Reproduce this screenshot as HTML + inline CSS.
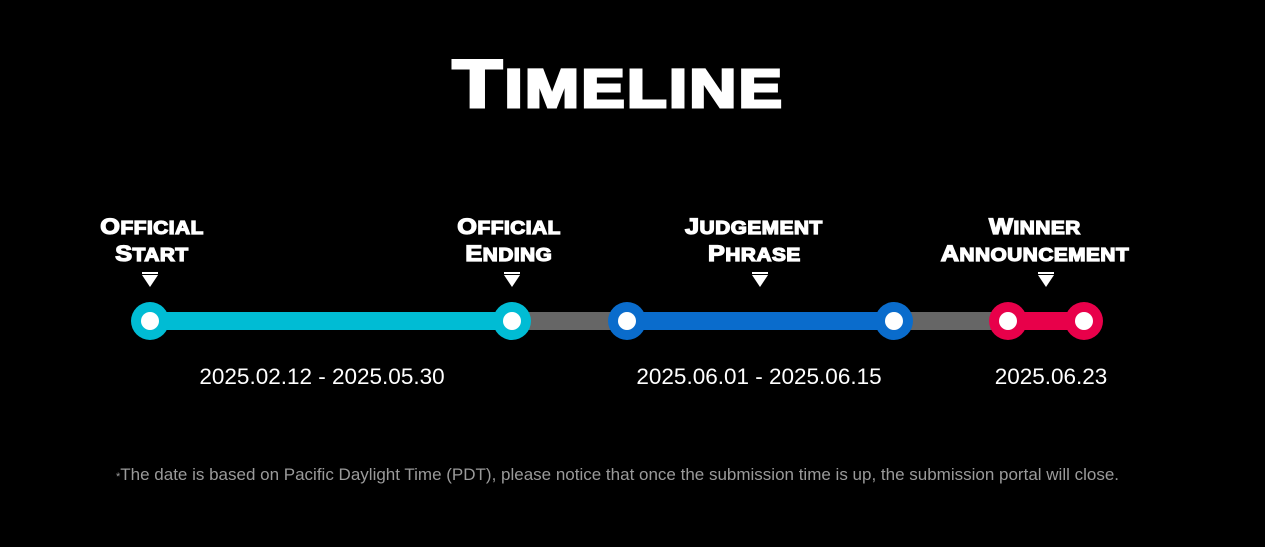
<!DOCTYPE html>
<html><head><style>
body{margin:0;width:1265px;height:547px;background:#000;position:relative;overflow:hidden;font-family:"Liberation Sans",sans-serif}
.t{position:absolute;left:-14px;width:1265px;top:48px;text-align:center;color:#fff;font-weight:bold;font-size:54px;-webkit-text-stroke:3px #fff;letter-spacing:2px;line-height:72px}
.t span{display:inline-block;transform:scaleX(1.2)}
.t b{font-size:68px}
.lab{position:absolute;color:#fff;font-weight:bold;font-size:18px;-webkit-text-stroke:1.3px #fff;text-align:center;line-height:25px;width:260px;margin-left:-130px;top:214px;letter-spacing:.5px}
.lab span{display:inline-block;transform:scaleX(1.15)}
.lab b{font-size:22px}
.arr{position:absolute;top:275px;width:0;height:0;margin-left:-8px;border-left:8px solid transparent;border-right:8px solid transparent;border-top:12px solid #fff}
.arr:before{content:"";position:absolute;left:-8px;top:-15px;width:16px;height:2px;background:#fff}
.bar{position:absolute;top:312px;height:18px}
.c{position:absolute;top:302px;width:38px;height:38px;margin-left:-19px;border-radius:50%;box-sizing:border-box}
.c:after{content:"";position:absolute;left:10px;top:10px;width:18px;height:18px;border-radius:50%;background:#fff}
.d{position:absolute;top:364px;color:#fff;font-size:22.5px;width:320px;margin-left:-160px;text-align:center}
.n{position:absolute;top:465px;left:0;width:1235px;text-align:center;color:#9a9a9a;font-size:17px}
</style></head><body>
<div class="t"><span><b>T</b>IMELINE</span></div>
<div class="lab" style="left:152px"><span><b>O</b>FFICIAL</span><br><span><b>S</b>TART</span></div>
<div class="lab" style="left:509px"><span><b>O</b>FFICIAL</span><br><span><b>E</b>NDING</span></div>
<div class="lab" style="left:754px"><span><b>J</b>UDGEMENT</span><br><span><b>P</b>HRASE</span></div>
<div class="lab" style="left:1035px"><span><b>W</b>INNER</span><br><span><b>A</b>NNOUNCEMENT</span></div>
<div class="arr" style="left:150px"></div>
<div class="arr" style="left:512px"></div>
<div class="arr" style="left:760px"></div>
<div class="arr" style="left:1046px"></div>
<div class="bar" style="left:150px;width:362px;background:#00bcd4"></div>
<div class="bar" style="left:512px;width:115px;background:#666"></div>
<div class="bar" style="left:627px;width:267px;background:#0a6ccc"></div>
<div class="bar" style="left:894px;width:114px;background:#666"></div>
<div class="bar" style="left:1008px;width:76px;background:#e8004a"></div>
<div class="c" style="left:150px;background:#00bcd4"></div>
<div class="c" style="left:512px;background:#00bcd4"></div>
<div class="c" style="left:627px;background:#0a6ccc"></div>
<div class="c" style="left:894px;background:#0a6ccc"></div>
<div class="c" style="left:1008px;background:#e8004a"></div>
<div class="c" style="left:1084px;background:#e8004a"></div>
<div class="d" style="left:322px">2025.02.12 - 2025.05.30</div>
<div class="d" style="left:759px">2025.06.01 - 2025.06.15</div>
<div class="d" style="left:1051px">2025.06.23</div>
<div class="n"><span style="font-size:11px">*</span>The date is based on Pacific Daylight Time (PDT), please notice that once the submission time is up, the submission portal will close.</div>
</body></html>
